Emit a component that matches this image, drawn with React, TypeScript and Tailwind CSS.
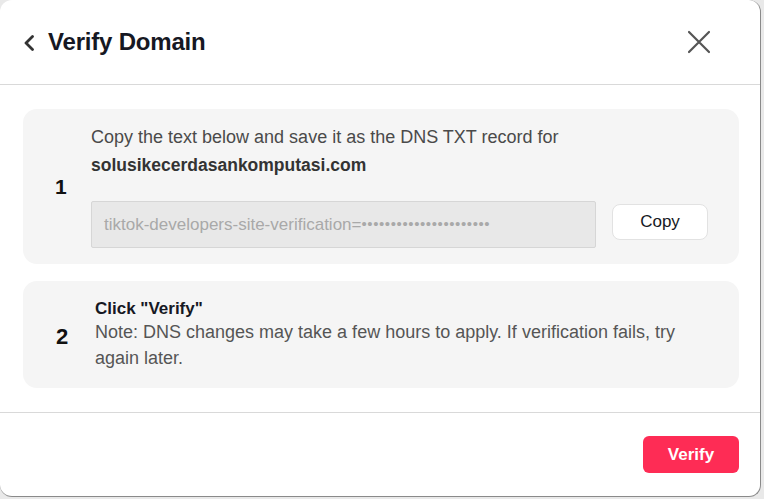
import React from 'react';

const App: React.FC = () => {
  return (
    <div className="w-[764px] h-[499px] bg-[#e9e9e9] font-['Liberation_Sans',Arial,sans-serif]">
      <div className="w-[761px] h-[497px] bg-white rounded-[12px] border-r border-b border-[#8a8a8a] flex flex-col overflow-hidden">
        {/* Header */}
        <div className="h-[85px] shrink-0 flex items-center justify-between pl-[23px] pr-[49px] border-b border-[#d9d9d9]">
          <div className="flex items-center gap-[13px]">
            <svg width="12" height="16" viewBox="0 0 12 16" className="mt-[1px]">
              <path d="M9.5 1.5 L3 8 L9.5 14.5" fill="none" stroke="#333" strokeWidth="2.8" strokeLinecap="round" strokeLinejoin="round" />
            </svg>
            <h1 className="text-[24px] font-bold text-[#161823] tracking-[-0.2px]">Verify Domain</h1>
          </div>
          <svg width="24" height="24" viewBox="0 0 24 24">
            <path d="M2 2 L22 22 M22 2 L2 22" fill="none" stroke="#555" strokeWidth="2.2" strokeLinecap="round" />
          </svg>
        </div>

        {/* Body */}
        <div className="flex-1 flex flex-col gap-[17px] pl-[23px] pr-[21px] pt-[24px]">
          <div className="bg-[#f5f5f5] rounded-[14px] h-[155px] flex items-center pl-[32px] pr-[32px]">
            <div className="w-[36px] text-[21px] font-bold text-[#111] shrink-0">1</div>
            <div className="flex-1 flex flex-col self-start pt-[14px]">
              <p className="text-[18px] leading-[28px] text-[#4a4a4a]">
                Copy the text below and save it as the DNS TXT record for
              </p>
              <p className="text-[17.5px] leading-[28px] font-bold text-[#333]">solusikecerdasankomputasi.com</p>
              <div className="flex items-start gap-[16px] mt-[22px]">
                <div className="w-[505px] h-[47px] bg-[#e8e8e8] border border-[#d6d6d6] rounded-[2px] flex items-center px-[12px] text-[17px] text-[#a9a9a9] whitespace-nowrap overflow-hidden">
                  tiktok-developers-site-verification=<span className="text-[15px] tracking-[0.6px]">••••••••••••••••••••••</span>
                </div>
                <button className="mt-[3px] w-[96px] h-[36px] bg-white border border-[#e2e2e2] rounded-[8px] text-[17px] font-medium text-[#161823]">
                  Copy
                </button>
              </div>
            </div>
          </div>

          <div className="bg-[#f5f5f5] rounded-[14px] h-[107px] flex items-center pl-[33px] pr-[32px]">
            <div className="w-[39px] text-[22px] font-bold text-[#111] shrink-0 pt-[4px]">2</div>
            <div className="flex-1 flex flex-col">
              <p className="text-[17px] leading-[20px] font-bold text-[#161823]">Click "Verify"</p>
              <p className="text-[18px] leading-[26px] text-[#555]">
                Note: DNS changes may take a few hours to apply. If verification fails, try
                <br />
                again later.
              </p>
            </div>
          </div>
        </div>

        {/* Footer */}
        <div className="h-[84px] shrink-0 border-t border-[#d9d9d9] flex items-center justify-end pr-[21px]">
          <button className="w-[96px] h-[37px] bg-[#fe2c55] rounded-[6px] text-white text-[17px] font-bold">
            Verify
          </button>
        </div>
      </div>
    </div>
  );
};

export default App;
